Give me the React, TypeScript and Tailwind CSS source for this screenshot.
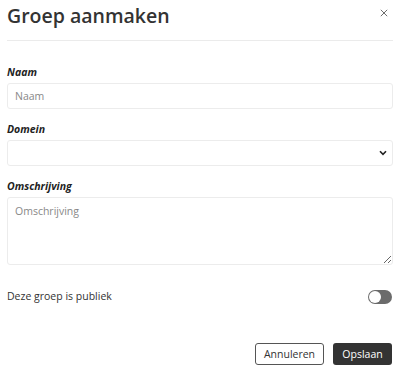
import { useState } from "react"

export default function App() {
  const [isPublic, setIsPublic] = useState(false)

  return (
    <div className="w-[400px] h-[372px] bg-white text-[#333] font-['Open_Sans',sans-serif]">
      {/* Header */}
      <div className="mx-[7px] h-[41px] border-b border-[#ebebeb] flex justify-between items-start">
        <h2 className="text-[19.5px] leading-[20px] font-semibold pt-[6px]">Groep aanmaken</h2>
        <button className="text-[#666] mt-[9px] mr-[5px]">
          <svg width="8" height="8" viewBox="0 0 10 10" stroke="currentColor" strokeWidth="1.2">
            <path d="M1 1 L9 9 M9 1 L1 9" />
          </svg>
        </button>
      </div>

      {/* Form */}
      <div className="mx-[7px] pt-[23px]">
        <label className="block text-[10.5px] leading-[17px] font-bold italic text-[#222] mb-[2px]">Naam</label>
        <input
          placeholder="Naam"
          className="block w-full h-[26px] border border-[#ececec] rounded-[3px] px-[7px] text-[10.5px] placeholder:text-[#888] outline-none"
        />

        <label className="block text-[10.5px] leading-[17px] font-bold italic text-[#222] mt-[12px] mb-[2px]">Domein</label>
        <div className="relative">
          <select className="block w-full h-[26px] border border-[#ececec] rounded-[3px] px-[7px] text-[10.5px] bg-white appearance-none outline-none">
            <option></option>
          </select>
          <svg className="absolute right-[6px] top-[10px] pointer-events-none" width="8" height="6" viewBox="0 0 8 6" fill="none" stroke="#222" strokeWidth="1.6">
            <path d="M1 1.2 L4 4.4 L7 1.2" />
          </svg>
        </div>

        <label className="block text-[10.5px] leading-[17px] font-bold italic text-[#222] mt-[12px] mb-[2px]">Omschrijving</label>
        <textarea
          placeholder="Omschrijving"
          className="block w-full h-[68px] border border-[#ececec] rounded-[3px] px-[7px] py-[6px] text-[10.5px] placeholder:text-[#888] outline-none"
        />

        <div className="flex items-center justify-between mt-[23px] h-[18px]">
          <span className="text-[10.5px] text-[#333]">Deze groep is publiek</span>
          <button
            onClick={() => setIsPublic(!isPublic)}
            className="w-[24px] h-[14px] rounded-full bg-[#6b6b6b] relative mr-[1px]"
          >
            <span className="absolute left-[1px] top-[1px] w-[12px] h-[12px] rounded-full bg-white" />
          </button>
        </div>

        <div className="flex justify-end gap-[9px] mt-[37px] mr-[1px]">
          <button className="w-[69px] h-[22px] border border-[#555] rounded-[3px] text-[10.5px] leading-[16px] text-[#333] bg-white">Annuleren</button>
          <button className="w-[59px] h-[22px] rounded-[3px] text-[10.5px] leading-[16px] text-white bg-[#333]">Opslaan</button>
        </div>
      </div>
    </div>
  )
}
